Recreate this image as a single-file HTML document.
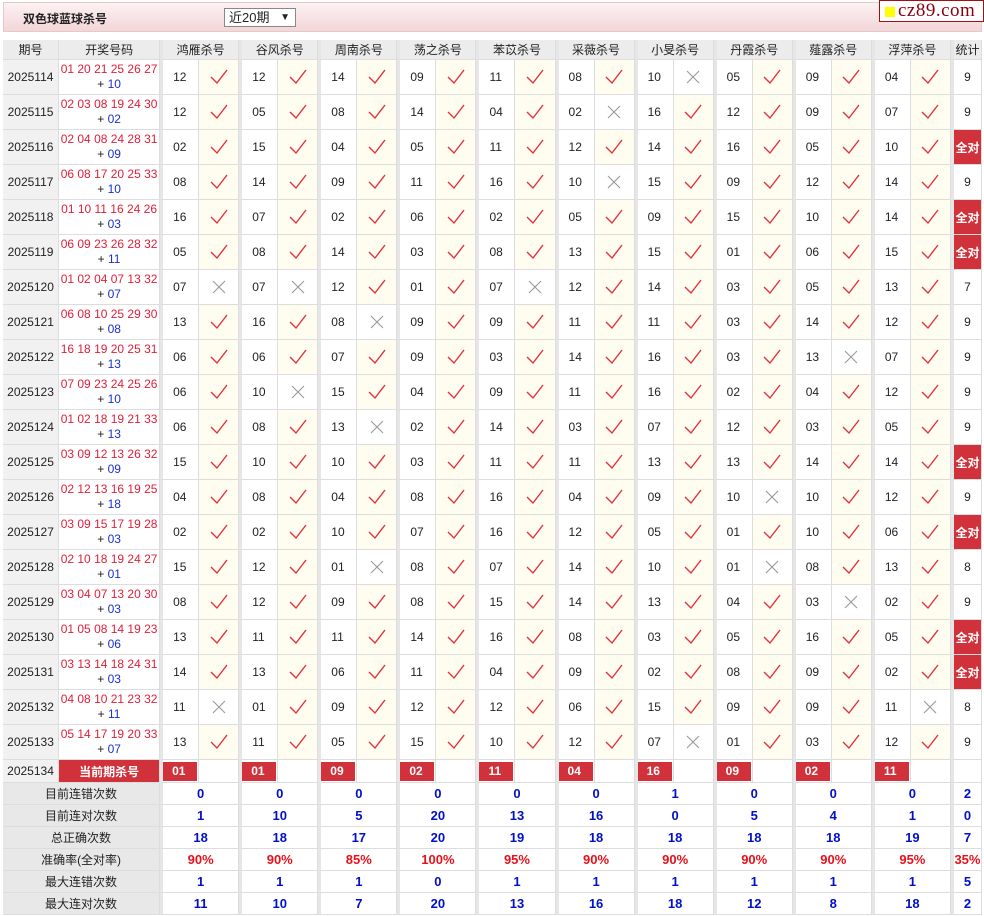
<!DOCTYPE html>
<html><head><meta charset="utf-8"><style>
*{margin:0;padding:0;box-sizing:border-box}
body{width:984px;height:916px;background:#fff;font-family:"Liberation Sans","Noto Sans CJK SC",sans-serif;font-size:12px;color:#222;position:relative;overflow:hidden}
.top{position:absolute;left:3px;top:2px;width:979px;height:30px;background:linear-gradient(#fcf2f3,#f3d6d8);border:1px solid #e6caca}
.title{position:absolute;left:19px;top:7px;font-weight:bold;font-size:12px;color:#222}
.sel{position:absolute;left:220px;top:5px;width:72px;height:19px;border:1px solid #888;background:#fff;font-size:13px;padding-left:4px;line-height:17px}
.sel span{position:absolute;right:5px;top:0;font-size:10px}
.logo{position:absolute;left:879px;top:0;width:105px;height:22px;border:1px solid #a01010;background:#fff}
.logo i{position:absolute;left:5px;top:6px;width:10px;height:10px;background:#ff0}
.logo b{position:absolute;left:18px;top:-1px;font-family:"Liberation Serif",serif;font-weight:normal;font-size:19px;color:#8a0010;letter-spacing:.5px}
table{position:absolute;left:3px;top:40px;width:979px;border-collapse:separate;border-spacing:0;table-layout:fixed}
td{border-right:1px solid #ddd;border-bottom:1px solid #ddd;text-align:center;height:35px;font-size:12px;padding:0}
tr.h td{height:20px;background:#ececec;font-size:12px}
td.p{background:#f1f1f1}
td.k{color:#e0203a;font-size:12px;line-height:15px}
td.k em{font-style:normal;color:#222}
td.k u{text-decoration:none;color:#1a2fd0}
td.n{border-left:3px solid #e6e6e6;text-align:left;padding-left:10px;font-size:12px}
td.c{background:#fffdef}
td.x{background:#fff}
td.s{font-size:12px}
td.q{background:#d0313a;color:#fff;font-weight:bold}
svg{display:block;margin:0 auto}
tr.cur td{height:22px}
tr.cur td.n{padding:2px 0 1px 0}
tr.cur td.n div{background:#d0313a;color:#fff;font-weight:bold;height:19px;line-height:19px;width:34px;padding-left:9px;text-align:left}
td.cur{background:#d0313a;color:#fff;font-weight:bold;font-size:12px}
tr.st td{height:22px;background:#fff;color:#0010c8;font-weight:bold;font-size:13px}
tr.st td.l{background:#e8e8e8;color:#222;font-weight:normal;font-size:12px}
tr.st td.g{border-left:3px solid #e6e6e6}
tr.r td{color:#e8101a}
</style></head><body>
<svg width="0" height="0" style="position:absolute"><defs>
<symbol id="ok" viewBox="0 0 18 16"><path d="M1 8 L7 14 L17 1" fill="none" stroke="#e2303e" stroke-width="1.4"/></symbol>
<symbol id="no" viewBox="0 0 16 16"><path d="M2 2 L14 14 M14 2 L2 14" fill="none" stroke="#999" stroke-width="1.1"/></symbol>
</defs></svg>
<div class="top"><div class="title">双色球蓝球杀号</div><div class="sel">近20期<span>&#9660;</span></div></div>
<div class="logo"><i></i><b>cz89.com</b></div>
<table>
<colgroup><col style="width:56px"><col style="width:101px">
<col style="width:39px"><col style="width:40px"><col style="width:39px"><col style="width:40px"><col style="width:39px"><col style="width:40px"><col style="width:39px"><col style="width:40px"><col style="width:39px"><col style="width:40px"><col style="width:39px"><col style="width:40px"><col style="width:39px"><col style="width:40px"><col style="width:39px"><col style="width:40px"><col style="width:39px"><col style="width:40px"><col style="width:39px"><col style="width:40px">
<col style="width:31px"></colgroup>
<tr class="h"><td>期号</td><td>开奖号码</td><td colspan="2" style="border-left:3px solid #e6e6e6">鸿雁杀号</td><td colspan="2" style="border-left:3px solid #e6e6e6">谷风杀号</td><td colspan="2" style="border-left:3px solid #e6e6e6">周南杀号</td><td colspan="2" style="border-left:3px solid #e6e6e6">荡之杀号</td><td colspan="2" style="border-left:3px solid #e6e6e6">苯苡杀号</td><td colspan="2" style="border-left:3px solid #e6e6e6">采薇杀号</td><td colspan="2" style="border-left:3px solid #e6e6e6">小旻杀号</td><td colspan="2" style="border-left:3px solid #e6e6e6">丹霞杀号</td><td colspan="2" style="border-left:3px solid #e6e6e6">薤露杀号</td><td colspan="2" style="border-left:3px solid #e6e6e6">浮萍杀号</td><td style="border-left:3px solid #e6e6e6">统计</td></tr>

<tr><td class="p">2025114</td><td class="k">01 20 21 25 26 27<br><em>+ </em><u>10</u></td><td class="n">12</td><td class="c"><svg width="18" height="16"><use href="#ok"/></svg></td><td class="n">12</td><td class="c"><svg width="18" height="16"><use href="#ok"/></svg></td><td class="n">14</td><td class="c"><svg width="18" height="16"><use href="#ok"/></svg></td><td class="n">09</td><td class="c"><svg width="18" height="16"><use href="#ok"/></svg></td><td class="n">11</td><td class="c"><svg width="18" height="16"><use href="#ok"/></svg></td><td class="n">08</td><td class="c"><svg width="18" height="16"><use href="#ok"/></svg></td><td class="n">10</td><td class="x"><svg width="16" height="16"><use href="#no"/></svg></td><td class="n">05</td><td class="c"><svg width="18" height="16"><use href="#ok"/></svg></td><td class="n">09</td><td class="c"><svg width="18" height="16"><use href="#ok"/></svg></td><td class="n">04</td><td class="c"><svg width="18" height="16"><use href="#ok"/></svg></td><td class="s" style="border-left:3px solid #e6e6e6">9</td></tr>

<tr><td class="p">2025115</td><td class="k">02 03 08 19 24 30<br><em>+ </em><u>02</u></td><td class="n">12</td><td class="c"><svg width="18" height="16"><use href="#ok"/></svg></td><td class="n">05</td><td class="c"><svg width="18" height="16"><use href="#ok"/></svg></td><td class="n">08</td><td class="c"><svg width="18" height="16"><use href="#ok"/></svg></td><td class="n">14</td><td class="c"><svg width="18" height="16"><use href="#ok"/></svg></td><td class="n">04</td><td class="c"><svg width="18" height="16"><use href="#ok"/></svg></td><td class="n">02</td><td class="x"><svg width="16" height="16"><use href="#no"/></svg></td><td class="n">16</td><td class="c"><svg width="18" height="16"><use href="#ok"/></svg></td><td class="n">12</td><td class="c"><svg width="18" height="16"><use href="#ok"/></svg></td><td class="n">09</td><td class="c"><svg width="18" height="16"><use href="#ok"/></svg></td><td class="n">07</td><td class="c"><svg width="18" height="16"><use href="#ok"/></svg></td><td class="s" style="border-left:3px solid #e6e6e6">9</td></tr>

<tr><td class="p">2025116</td><td class="k">02 04 08 24 28 31<br><em>+ </em><u>09</u></td><td class="n">02</td><td class="c"><svg width="18" height="16"><use href="#ok"/></svg></td><td class="n">15</td><td class="c"><svg width="18" height="16"><use href="#ok"/></svg></td><td class="n">04</td><td class="c"><svg width="18" height="16"><use href="#ok"/></svg></td><td class="n">05</td><td class="c"><svg width="18" height="16"><use href="#ok"/></svg></td><td class="n">11</td><td class="c"><svg width="18" height="16"><use href="#ok"/></svg></td><td class="n">12</td><td class="c"><svg width="18" height="16"><use href="#ok"/></svg></td><td class="n">14</td><td class="c"><svg width="18" height="16"><use href="#ok"/></svg></td><td class="n">16</td><td class="c"><svg width="18" height="16"><use href="#ok"/></svg></td><td class="n">05</td><td class="c"><svg width="18" height="16"><use href="#ok"/></svg></td><td class="n">10</td><td class="c"><svg width="18" height="16"><use href="#ok"/></svg></td><td class="s q" style="border-left:3px solid #e6e6e6">全对</td></tr>

<tr><td class="p">2025117</td><td class="k">06 08 17 20 25 33<br><em>+ </em><u>10</u></td><td class="n">08</td><td class="c"><svg width="18" height="16"><use href="#ok"/></svg></td><td class="n">14</td><td class="c"><svg width="18" height="16"><use href="#ok"/></svg></td><td class="n">09</td><td class="c"><svg width="18" height="16"><use href="#ok"/></svg></td><td class="n">11</td><td class="c"><svg width="18" height="16"><use href="#ok"/></svg></td><td class="n">16</td><td class="c"><svg width="18" height="16"><use href="#ok"/></svg></td><td class="n">10</td><td class="x"><svg width="16" height="16"><use href="#no"/></svg></td><td class="n">15</td><td class="c"><svg width="18" height="16"><use href="#ok"/></svg></td><td class="n">09</td><td class="c"><svg width="18" height="16"><use href="#ok"/></svg></td><td class="n">12</td><td class="c"><svg width="18" height="16"><use href="#ok"/></svg></td><td class="n">14</td><td class="c"><svg width="18" height="16"><use href="#ok"/></svg></td><td class="s" style="border-left:3px solid #e6e6e6">9</td></tr>

<tr><td class="p">2025118</td><td class="k">01 10 11 16 24 26<br><em>+ </em><u>03</u></td><td class="n">16</td><td class="c"><svg width="18" height="16"><use href="#ok"/></svg></td><td class="n">07</td><td class="c"><svg width="18" height="16"><use href="#ok"/></svg></td><td class="n">02</td><td class="c"><svg width="18" height="16"><use href="#ok"/></svg></td><td class="n">06</td><td class="c"><svg width="18" height="16"><use href="#ok"/></svg></td><td class="n">02</td><td class="c"><svg width="18" height="16"><use href="#ok"/></svg></td><td class="n">05</td><td class="c"><svg width="18" height="16"><use href="#ok"/></svg></td><td class="n">09</td><td class="c"><svg width="18" height="16"><use href="#ok"/></svg></td><td class="n">15</td><td class="c"><svg width="18" height="16"><use href="#ok"/></svg></td><td class="n">10</td><td class="c"><svg width="18" height="16"><use href="#ok"/></svg></td><td class="n">14</td><td class="c"><svg width="18" height="16"><use href="#ok"/></svg></td><td class="s q" style="border-left:3px solid #e6e6e6">全对</td></tr>

<tr><td class="p">2025119</td><td class="k">06 09 23 26 28 32<br><em>+ </em><u>11</u></td><td class="n">05</td><td class="c"><svg width="18" height="16"><use href="#ok"/></svg></td><td class="n">08</td><td class="c"><svg width="18" height="16"><use href="#ok"/></svg></td><td class="n">14</td><td class="c"><svg width="18" height="16"><use href="#ok"/></svg></td><td class="n">03</td><td class="c"><svg width="18" height="16"><use href="#ok"/></svg></td><td class="n">08</td><td class="c"><svg width="18" height="16"><use href="#ok"/></svg></td><td class="n">13</td><td class="c"><svg width="18" height="16"><use href="#ok"/></svg></td><td class="n">15</td><td class="c"><svg width="18" height="16"><use href="#ok"/></svg></td><td class="n">01</td><td class="c"><svg width="18" height="16"><use href="#ok"/></svg></td><td class="n">06</td><td class="c"><svg width="18" height="16"><use href="#ok"/></svg></td><td class="n">15</td><td class="c"><svg width="18" height="16"><use href="#ok"/></svg></td><td class="s q" style="border-left:3px solid #e6e6e6">全对</td></tr>

<tr><td class="p">2025120</td><td class="k">01 02 04 07 13 32<br><em>+ </em><u>07</u></td><td class="n">07</td><td class="x"><svg width="16" height="16"><use href="#no"/></svg></td><td class="n">07</td><td class="x"><svg width="16" height="16"><use href="#no"/></svg></td><td class="n">12</td><td class="c"><svg width="18" height="16"><use href="#ok"/></svg></td><td class="n">01</td><td class="c"><svg width="18" height="16"><use href="#ok"/></svg></td><td class="n">07</td><td class="x"><svg width="16" height="16"><use href="#no"/></svg></td><td class="n">12</td><td class="c"><svg width="18" height="16"><use href="#ok"/></svg></td><td class="n">14</td><td class="c"><svg width="18" height="16"><use href="#ok"/></svg></td><td class="n">03</td><td class="c"><svg width="18" height="16"><use href="#ok"/></svg></td><td class="n">05</td><td class="c"><svg width="18" height="16"><use href="#ok"/></svg></td><td class="n">13</td><td class="c"><svg width="18" height="16"><use href="#ok"/></svg></td><td class="s" style="border-left:3px solid #e6e6e6">7</td></tr>

<tr><td class="p">2025121</td><td class="k">06 08 10 25 29 30<br><em>+ </em><u>08</u></td><td class="n">13</td><td class="c"><svg width="18" height="16"><use href="#ok"/></svg></td><td class="n">16</td><td class="c"><svg width="18" height="16"><use href="#ok"/></svg></td><td class="n">08</td><td class="x"><svg width="16" height="16"><use href="#no"/></svg></td><td class="n">09</td><td class="c"><svg width="18" height="16"><use href="#ok"/></svg></td><td class="n">09</td><td class="c"><svg width="18" height="16"><use href="#ok"/></svg></td><td class="n">11</td><td class="c"><svg width="18" height="16"><use href="#ok"/></svg></td><td class="n">11</td><td class="c"><svg width="18" height="16"><use href="#ok"/></svg></td><td class="n">03</td><td class="c"><svg width="18" height="16"><use href="#ok"/></svg></td><td class="n">14</td><td class="c"><svg width="18" height="16"><use href="#ok"/></svg></td><td class="n">12</td><td class="c"><svg width="18" height="16"><use href="#ok"/></svg></td><td class="s" style="border-left:3px solid #e6e6e6">9</td></tr>

<tr><td class="p">2025122</td><td class="k">16 18 19 20 25 31<br><em>+ </em><u>13</u></td><td class="n">06</td><td class="c"><svg width="18" height="16"><use href="#ok"/></svg></td><td class="n">06</td><td class="c"><svg width="18" height="16"><use href="#ok"/></svg></td><td class="n">07</td><td class="c"><svg width="18" height="16"><use href="#ok"/></svg></td><td class="n">09</td><td class="c"><svg width="18" height="16"><use href="#ok"/></svg></td><td class="n">03</td><td class="c"><svg width="18" height="16"><use href="#ok"/></svg></td><td class="n">14</td><td class="c"><svg width="18" height="16"><use href="#ok"/></svg></td><td class="n">16</td><td class="c"><svg width="18" height="16"><use href="#ok"/></svg></td><td class="n">03</td><td class="c"><svg width="18" height="16"><use href="#ok"/></svg></td><td class="n">13</td><td class="x"><svg width="16" height="16"><use href="#no"/></svg></td><td class="n">07</td><td class="c"><svg width="18" height="16"><use href="#ok"/></svg></td><td class="s" style="border-left:3px solid #e6e6e6">9</td></tr>

<tr><td class="p">2025123</td><td class="k">07 09 23 24 25 26<br><em>+ </em><u>10</u></td><td class="n">06</td><td class="c"><svg width="18" height="16"><use href="#ok"/></svg></td><td class="n">10</td><td class="x"><svg width="16" height="16"><use href="#no"/></svg></td><td class="n">15</td><td class="c"><svg width="18" height="16"><use href="#ok"/></svg></td><td class="n">04</td><td class="c"><svg width="18" height="16"><use href="#ok"/></svg></td><td class="n">09</td><td class="c"><svg width="18" height="16"><use href="#ok"/></svg></td><td class="n">11</td><td class="c"><svg width="18" height="16"><use href="#ok"/></svg></td><td class="n">16</td><td class="c"><svg width="18" height="16"><use href="#ok"/></svg></td><td class="n">02</td><td class="c"><svg width="18" height="16"><use href="#ok"/></svg></td><td class="n">04</td><td class="c"><svg width="18" height="16"><use href="#ok"/></svg></td><td class="n">12</td><td class="c"><svg width="18" height="16"><use href="#ok"/></svg></td><td class="s" style="border-left:3px solid #e6e6e6">9</td></tr>

<tr><td class="p">2025124</td><td class="k">01 02 18 19 21 33<br><em>+ </em><u>13</u></td><td class="n">06</td><td class="c"><svg width="18" height="16"><use href="#ok"/></svg></td><td class="n">08</td><td class="c"><svg width="18" height="16"><use href="#ok"/></svg></td><td class="n">13</td><td class="x"><svg width="16" height="16"><use href="#no"/></svg></td><td class="n">02</td><td class="c"><svg width="18" height="16"><use href="#ok"/></svg></td><td class="n">14</td><td class="c"><svg width="18" height="16"><use href="#ok"/></svg></td><td class="n">03</td><td class="c"><svg width="18" height="16"><use href="#ok"/></svg></td><td class="n">07</td><td class="c"><svg width="18" height="16"><use href="#ok"/></svg></td><td class="n">12</td><td class="c"><svg width="18" height="16"><use href="#ok"/></svg></td><td class="n">03</td><td class="c"><svg width="18" height="16"><use href="#ok"/></svg></td><td class="n">05</td><td class="c"><svg width="18" height="16"><use href="#ok"/></svg></td><td class="s" style="border-left:3px solid #e6e6e6">9</td></tr>

<tr><td class="p">2025125</td><td class="k">03 09 12 13 26 32<br><em>+ </em><u>09</u></td><td class="n">15</td><td class="c"><svg width="18" height="16"><use href="#ok"/></svg></td><td class="n">10</td><td class="c"><svg width="18" height="16"><use href="#ok"/></svg></td><td class="n">10</td><td class="c"><svg width="18" height="16"><use href="#ok"/></svg></td><td class="n">03</td><td class="c"><svg width="18" height="16"><use href="#ok"/></svg></td><td class="n">11</td><td class="c"><svg width="18" height="16"><use href="#ok"/></svg></td><td class="n">11</td><td class="c"><svg width="18" height="16"><use href="#ok"/></svg></td><td class="n">13</td><td class="c"><svg width="18" height="16"><use href="#ok"/></svg></td><td class="n">13</td><td class="c"><svg width="18" height="16"><use href="#ok"/></svg></td><td class="n">14</td><td class="c"><svg width="18" height="16"><use href="#ok"/></svg></td><td class="n">14</td><td class="c"><svg width="18" height="16"><use href="#ok"/></svg></td><td class="s q" style="border-left:3px solid #e6e6e6">全对</td></tr>

<tr><td class="p">2025126</td><td class="k">02 12 13 16 19 25<br><em>+ </em><u>18</u></td><td class="n">04</td><td class="c"><svg width="18" height="16"><use href="#ok"/></svg></td><td class="n">08</td><td class="c"><svg width="18" height="16"><use href="#ok"/></svg></td><td class="n">04</td><td class="c"><svg width="18" height="16"><use href="#ok"/></svg></td><td class="n">08</td><td class="c"><svg width="18" height="16"><use href="#ok"/></svg></td><td class="n">16</td><td class="c"><svg width="18" height="16"><use href="#ok"/></svg></td><td class="n">04</td><td class="c"><svg width="18" height="16"><use href="#ok"/></svg></td><td class="n">09</td><td class="c"><svg width="18" height="16"><use href="#ok"/></svg></td><td class="n">10</td><td class="x"><svg width="16" height="16"><use href="#no"/></svg></td><td class="n">10</td><td class="c"><svg width="18" height="16"><use href="#ok"/></svg></td><td class="n">12</td><td class="c"><svg width="18" height="16"><use href="#ok"/></svg></td><td class="s" style="border-left:3px solid #e6e6e6">9</td></tr>

<tr><td class="p">2025127</td><td class="k">03 09 15 17 19 28<br><em>+ </em><u>03</u></td><td class="n">02</td><td class="c"><svg width="18" height="16"><use href="#ok"/></svg></td><td class="n">02</td><td class="c"><svg width="18" height="16"><use href="#ok"/></svg></td><td class="n">10</td><td class="c"><svg width="18" height="16"><use href="#ok"/></svg></td><td class="n">07</td><td class="c"><svg width="18" height="16"><use href="#ok"/></svg></td><td class="n">16</td><td class="c"><svg width="18" height="16"><use href="#ok"/></svg></td><td class="n">12</td><td class="c"><svg width="18" height="16"><use href="#ok"/></svg></td><td class="n">05</td><td class="c"><svg width="18" height="16"><use href="#ok"/></svg></td><td class="n">01</td><td class="c"><svg width="18" height="16"><use href="#ok"/></svg></td><td class="n">10</td><td class="c"><svg width="18" height="16"><use href="#ok"/></svg></td><td class="n">06</td><td class="c"><svg width="18" height="16"><use href="#ok"/></svg></td><td class="s q" style="border-left:3px solid #e6e6e6">全对</td></tr>

<tr><td class="p">2025128</td><td class="k">02 10 18 19 24 27<br><em>+ </em><u>01</u></td><td class="n">15</td><td class="c"><svg width="18" height="16"><use href="#ok"/></svg></td><td class="n">12</td><td class="c"><svg width="18" height="16"><use href="#ok"/></svg></td><td class="n">01</td><td class="x"><svg width="16" height="16"><use href="#no"/></svg></td><td class="n">08</td><td class="c"><svg width="18" height="16"><use href="#ok"/></svg></td><td class="n">07</td><td class="c"><svg width="18" height="16"><use href="#ok"/></svg></td><td class="n">14</td><td class="c"><svg width="18" height="16"><use href="#ok"/></svg></td><td class="n">10</td><td class="c"><svg width="18" height="16"><use href="#ok"/></svg></td><td class="n">01</td><td class="x"><svg width="16" height="16"><use href="#no"/></svg></td><td class="n">08</td><td class="c"><svg width="18" height="16"><use href="#ok"/></svg></td><td class="n">13</td><td class="c"><svg width="18" height="16"><use href="#ok"/></svg></td><td class="s" style="border-left:3px solid #e6e6e6">8</td></tr>

<tr><td class="p">2025129</td><td class="k">03 04 07 13 20 30<br><em>+ </em><u>03</u></td><td class="n">08</td><td class="c"><svg width="18" height="16"><use href="#ok"/></svg></td><td class="n">12</td><td class="c"><svg width="18" height="16"><use href="#ok"/></svg></td><td class="n">09</td><td class="c"><svg width="18" height="16"><use href="#ok"/></svg></td><td class="n">08</td><td class="c"><svg width="18" height="16"><use href="#ok"/></svg></td><td class="n">15</td><td class="c"><svg width="18" height="16"><use href="#ok"/></svg></td><td class="n">14</td><td class="c"><svg width="18" height="16"><use href="#ok"/></svg></td><td class="n">13</td><td class="c"><svg width="18" height="16"><use href="#ok"/></svg></td><td class="n">04</td><td class="c"><svg width="18" height="16"><use href="#ok"/></svg></td><td class="n">03</td><td class="x"><svg width="16" height="16"><use href="#no"/></svg></td><td class="n">02</td><td class="c"><svg width="18" height="16"><use href="#ok"/></svg></td><td class="s" style="border-left:3px solid #e6e6e6">9</td></tr>

<tr><td class="p">2025130</td><td class="k">01 05 08 14 19 23<br><em>+ </em><u>06</u></td><td class="n">13</td><td class="c"><svg width="18" height="16"><use href="#ok"/></svg></td><td class="n">11</td><td class="c"><svg width="18" height="16"><use href="#ok"/></svg></td><td class="n">11</td><td class="c"><svg width="18" height="16"><use href="#ok"/></svg></td><td class="n">14</td><td class="c"><svg width="18" height="16"><use href="#ok"/></svg></td><td class="n">16</td><td class="c"><svg width="18" height="16"><use href="#ok"/></svg></td><td class="n">08</td><td class="c"><svg width="18" height="16"><use href="#ok"/></svg></td><td class="n">03</td><td class="c"><svg width="18" height="16"><use href="#ok"/></svg></td><td class="n">05</td><td class="c"><svg width="18" height="16"><use href="#ok"/></svg></td><td class="n">16</td><td class="c"><svg width="18" height="16"><use href="#ok"/></svg></td><td class="n">05</td><td class="c"><svg width="18" height="16"><use href="#ok"/></svg></td><td class="s q" style="border-left:3px solid #e6e6e6">全对</td></tr>

<tr><td class="p">2025131</td><td class="k">03 13 14 18 24 31<br><em>+ </em><u>03</u></td><td class="n">14</td><td class="c"><svg width="18" height="16"><use href="#ok"/></svg></td><td class="n">13</td><td class="c"><svg width="18" height="16"><use href="#ok"/></svg></td><td class="n">06</td><td class="c"><svg width="18" height="16"><use href="#ok"/></svg></td><td class="n">11</td><td class="c"><svg width="18" height="16"><use href="#ok"/></svg></td><td class="n">04</td><td class="c"><svg width="18" height="16"><use href="#ok"/></svg></td><td class="n">09</td><td class="c"><svg width="18" height="16"><use href="#ok"/></svg></td><td class="n">02</td><td class="c"><svg width="18" height="16"><use href="#ok"/></svg></td><td class="n">08</td><td class="c"><svg width="18" height="16"><use href="#ok"/></svg></td><td class="n">09</td><td class="c"><svg width="18" height="16"><use href="#ok"/></svg></td><td class="n">02</td><td class="c"><svg width="18" height="16"><use href="#ok"/></svg></td><td class="s q" style="border-left:3px solid #e6e6e6">全对</td></tr>

<tr><td class="p">2025132</td><td class="k">04 08 10 21 23 32<br><em>+ </em><u>11</u></td><td class="n">11</td><td class="x"><svg width="16" height="16"><use href="#no"/></svg></td><td class="n">01</td><td class="c"><svg width="18" height="16"><use href="#ok"/></svg></td><td class="n">09</td><td class="c"><svg width="18" height="16"><use href="#ok"/></svg></td><td class="n">12</td><td class="c"><svg width="18" height="16"><use href="#ok"/></svg></td><td class="n">12</td><td class="c"><svg width="18" height="16"><use href="#ok"/></svg></td><td class="n">06</td><td class="c"><svg width="18" height="16"><use href="#ok"/></svg></td><td class="n">15</td><td class="c"><svg width="18" height="16"><use href="#ok"/></svg></td><td class="n">09</td><td class="c"><svg width="18" height="16"><use href="#ok"/></svg></td><td class="n">09</td><td class="c"><svg width="18" height="16"><use href="#ok"/></svg></td><td class="n">11</td><td class="x"><svg width="16" height="16"><use href="#no"/></svg></td><td class="s" style="border-left:3px solid #e6e6e6">8</td></tr>

<tr><td class="p">2025133</td><td class="k">05 14 17 19 20 33<br><em>+ </em><u>07</u></td><td class="n">13</td><td class="c"><svg width="18" height="16"><use href="#ok"/></svg></td><td class="n">11</td><td class="c"><svg width="18" height="16"><use href="#ok"/></svg></td><td class="n">05</td><td class="c"><svg width="18" height="16"><use href="#ok"/></svg></td><td class="n">15</td><td class="c"><svg width="18" height="16"><use href="#ok"/></svg></td><td class="n">10</td><td class="c"><svg width="18" height="16"><use href="#ok"/></svg></td><td class="n">12</td><td class="c"><svg width="18" height="16"><use href="#ok"/></svg></td><td class="n">07</td><td class="x"><svg width="16" height="16"><use href="#no"/></svg></td><td class="n">01</td><td class="c"><svg width="18" height="16"><use href="#ok"/></svg></td><td class="n">03</td><td class="c"><svg width="18" height="16"><use href="#ok"/></svg></td><td class="n">12</td><td class="c"><svg width="18" height="16"><use href="#ok"/></svg></td><td class="s" style="border-left:3px solid #e6e6e6">9</td></tr>

<tr class="cur"><td class="p">2025134</td><td class="cur">当前期杀号</td><td class="n"><div>01</div></td><td></td><td class="n"><div>01</div></td><td></td><td class="n"><div>09</div></td><td></td><td class="n"><div>02</div></td><td></td><td class="n"><div>11</div></td><td></td><td class="n"><div>04</div></td><td></td><td class="n"><div>16</div></td><td></td><td class="n"><div>09</div></td><td></td><td class="n"><div>02</div></td><td></td><td class="n"><div>11</div></td><td></td><td style="border-left:3px solid #e6e6e6"></td></tr>

<tr class="st"><td class="l" colspan="2">目前连错次数</td><td class="g" colspan="2">0</td><td class="g" colspan="2">0</td><td class="g" colspan="2">0</td><td class="g" colspan="2">0</td><td class="g" colspan="2">0</td><td class="g" colspan="2">0</td><td class="g" colspan="2">1</td><td class="g" colspan="2">0</td><td class="g" colspan="2">0</td><td class="g" colspan="2">0</td><td class="g">2</td></tr>
<tr class="st"><td class="l" colspan="2">目前连对次数</td><td class="g" colspan="2">1</td><td class="g" colspan="2">10</td><td class="g" colspan="2">5</td><td class="g" colspan="2">20</td><td class="g" colspan="2">13</td><td class="g" colspan="2">16</td><td class="g" colspan="2">0</td><td class="g" colspan="2">5</td><td class="g" colspan="2">4</td><td class="g" colspan="2">1</td><td class="g">0</td></tr>
<tr class="st"><td class="l" colspan="2">总正确次数</td><td class="g" colspan="2">18</td><td class="g" colspan="2">18</td><td class="g" colspan="2">17</td><td class="g" colspan="2">20</td><td class="g" colspan="2">19</td><td class="g" colspan="2">18</td><td class="g" colspan="2">18</td><td class="g" colspan="2">18</td><td class="g" colspan="2">18</td><td class="g" colspan="2">19</td><td class="g">7</td></tr>
<tr class="st r"><td class="l" colspan="2" style="color:#222">准确率(全对率)</td><td class="g" colspan="2">90%</td><td class="g" colspan="2">90%</td><td class="g" colspan="2">85%</td><td class="g" colspan="2">100%</td><td class="g" colspan="2">95%</td><td class="g" colspan="2">90%</td><td class="g" colspan="2">90%</td><td class="g" colspan="2">90%</td><td class="g" colspan="2">90%</td><td class="g" colspan="2">95%</td><td class="g">35%</td></tr>
<tr class="st"><td class="l" colspan="2">最大连错次数</td><td class="g" colspan="2">1</td><td class="g" colspan="2">1</td><td class="g" colspan="2">1</td><td class="g" colspan="2">0</td><td class="g" colspan="2">1</td><td class="g" colspan="2">1</td><td class="g" colspan="2">1</td><td class="g" colspan="2">1</td><td class="g" colspan="2">1</td><td class="g" colspan="2">1</td><td class="g">5</td></tr>
<tr class="st"><td class="l" colspan="2">最大连对次数</td><td class="g" colspan="2">11</td><td class="g" colspan="2">10</td><td class="g" colspan="2">7</td><td class="g" colspan="2">20</td><td class="g" colspan="2">13</td><td class="g" colspan="2">16</td><td class="g" colspan="2">18</td><td class="g" colspan="2">12</td><td class="g" colspan="2">8</td><td class="g" colspan="2">18</td><td class="g">2</td></tr>
</table>
</body></html>
